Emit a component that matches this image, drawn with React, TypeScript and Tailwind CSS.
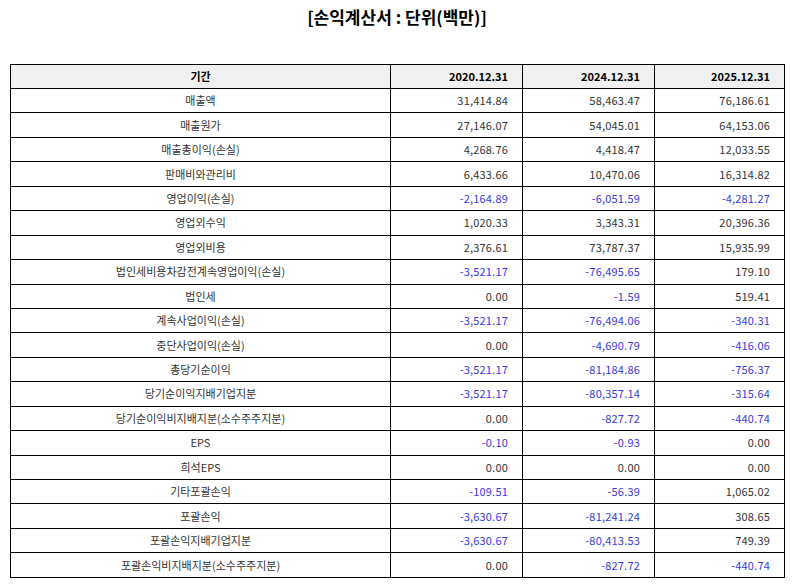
const rows: [string, string, string, string][] = [
  ['매출액', '31,414.84', '58,463.47', '76,186.61'],
  ['매출원가', '27,146.07', '54,045.01', '64,153.06'],
  ['매출총이익(손실)', '4,268.76', '4,418.47', '12,033.55'],
  ['판매비와관리비', '6,433.66', '10,470.06', '16,314.82'],
  ['영업이익(손실)', '-2,164.89', '-6,051.59', '-4,281.27'],
  ['영업외수익', '1,020.33', '3,343.31', '20,396.36'],
  ['영업외비용', '2,376.61', '73,787.37', '15,935.99'],
  ['법인세비용차감전계속영업이익(손실)', '-3,521.17', '-76,495.65', '179.10'],
  ['법인세', '0.00', '-1.59', '519.41'],
  ['계속사업이익(손실)', '-3,521.17', '-76,494.06', '-340.31'],
  ['중단사업이익(손실)', '0.00', '-4,690.79', '-416.06'],
  ['총당기순이익', '-3,521.17', '-81,184.86', '-756.37'],
  ['당기순이익지배기업지분', '-3,521.17', '-80,357.14', '-315.64'],
  ['당기순이익비지배지분(소수주주지분)', '0.00', '-827.72', '-440.74'],
  ['EPS', '-0.10', '-0.93', '0.00'],
  ['희석EPS', '0.00', '0.00', '0.00'],
  ['기타포괄손익', '-109.51', '-56.39', '1,065.02'],
  ['포괄손익', '-3,630.67', '-81,241.24', '308.65'],
  ['포괄손익지배기업지분', '-3,630.67', '-80,413.53', '749.39'],
  ['포괄손익비지배지분(소수주주지분)', '0.00', '-827.72', '-440.74'],
];

const headers = ['2020.12.31', '2024.12.31', '2025.12.31'];

export default function App() {
  return (
    <div
      className="w-[794px] h-[586px] bg-white text-black"
      style={{ fontFamily: '"Noto Sans CJK KR", "Noto Sans", sans-serif' }}
    >
      <h1 className="pt-[5px] text-center text-[17px] font-bold leading-[24px]">
        [손익계산서 : 단위(백만)]
      </h1>

      <table className="mt-[35px] ml-[10px] w-[775px] border-collapse text-[11px] leading-none">
        <colgroup>
          <col className="w-[380px]" />
          <col className="w-[132px]" />
          <col className="w-[132px]" />
          <col />
        </colgroup>
        <thead>
          <tr className="h-[24px] bg-[#f0f0f0] font-bold">
            <th className="border border-black text-center">기간</th>
            {headers.map((h) => (
              <th key={h} className="border border-black pr-[14px] text-right">
                {h}
              </th>
            ))}
          </tr>
        </thead>
        <tbody>
          {rows.map(([label, ...vals]) => (
            <tr key={label} className="h-[24.45px]">
              <td className="border border-black text-center text-[#333]">{label}</td>
              {vals.map((v, i) => (
                <td
                  key={i}
                  className={`border border-black pr-[14px] text-right tracking-[0.2px] ${
                    v.startsWith('-') ? 'text-[#3838dc]' : 'text-[#333]'
                  }`}
                >
                  {v}
                </td>
              ))}
            </tr>
          ))}
        </tbody>
      </table>
    </div>
  );
}
